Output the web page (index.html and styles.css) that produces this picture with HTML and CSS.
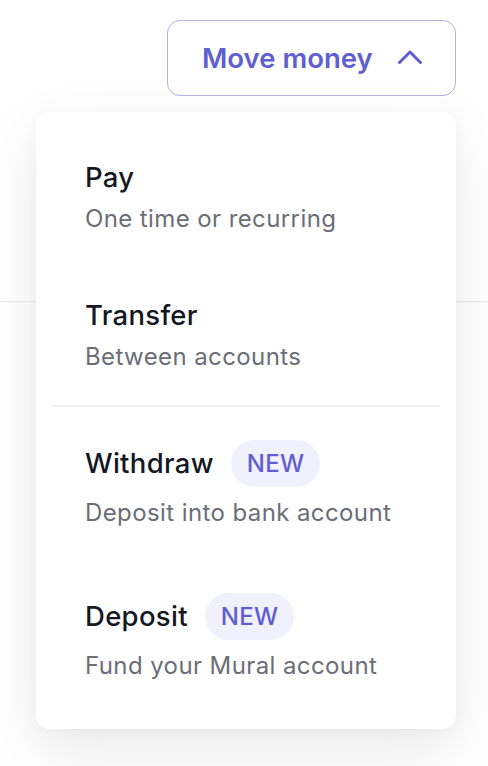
FILE: index.html
```html
<!DOCTYPE html>
<html>
<head>
  <meta charset="UTF-8">
  <link rel="stylesheet" href="styles.css">
</head>
<body>
  <!-- top bar -->
  <div class="topbar">
    <div class="move-wrap">
      <button class="move-btn">
        <span>Move money</span>
        <svg class="chevron" width="26" height="16" viewBox="0 0 26 16" fill="none">
          <path d="M2.5 13.5 L13 3 L23.5 13.5" stroke="#5f5fd1" stroke-width="3" stroke-linecap="round" stroke-linejoin="round"/>
        </svg>
      </button>

      <!-- dropdown -->
      <div class="move-menu">
        <div class="menu-item">
          <div class="item-title">Pay</div>
          <div class="item-sub">One time or recurring</div>
        </div>
        <div class="menu-item">
          <div class="item-title">Transfer</div>
          <div class="item-sub">Between accounts</div>
        </div>
        <div class="menu-divider"></div>
        <div class="menu-item badge-item">
          <div class="item-row">
            <span class="item-title">Withdraw</span>
            <span class="badge">NEW</span>
          </div>
          <div class="item-sub">Deposit into bank account</div>
        </div>
        <div class="menu-item badge-item">
          <div class="item-row">
            <span class="item-title">Deposit</span>
            <span class="badge">NEW</span>
          </div>
          <div class="item-sub">Fund your Mural account</div>
        </div>
      </div>
    </div>
  </div>
  <div class="content"></div>
</body>
</html>
```

FILE: styles.css
```css
/* base */
html, body {
  margin: 0;
  background: #ffffff;
}

body {
  min-height: 766px;
  display: flex;
  flex-direction: column;
  font-family: Inter, "Noto Sans", sans-serif;
  color: #141824;
}

.topbar {
  height: 302px;
  flex-shrink: 0;
  border-bottom: 1px solid #ededed;
  display: flex;
  justify-content: flex-end;
  padding: 20px 32px 0 0;
  box-sizing: border-box;
}

.content {
  flex: 1;
}

.move-wrap {
  position: relative;
  z-index: 10;
}

/* button */
.move-btn {
  display: flex;
  align-items: center;
  gap: 24px;
  width: 289px;
  height: 76px;
  padding: 0 32px 0 34px;
  box-sizing: border-box;
  background: #fff;
  border: 1.5px solid #b3b2e6;
  border-radius: 13px;
  font-family: Inter, "Noto Sans", sans-serif;
  font-size: 27.5px;
  font-weight: 600;
  color: #5f5fd1;
}

.chevron {
  margin-top: -2px;
}

/* dropdown */
.move-menu {
  position: absolute;
  top: 92px;
  right: 0;
  width: 420px;
  padding: 17px 16px 16px;
  box-sizing: border-box;
  background: #fff;
  border-radius: 14px;
  box-shadow: 0 20px 60px rgba(0, 0, 0, 0.09), 0 2px 12px rgba(0, 0, 0, 0.03);
}

.menu-item {
  padding: 32px 32px 32px 33px;
  border-radius: 10px;
}

.badge-item {
  padding-bottom: 31px;
}

.item-title {
  font-size: 27.5px;
  line-height: 32px;
  font-weight: 500;
  letter-spacing: 0.3px;
  color: #151823;
}

.item-sub {
  margin-top: 10px;
  font-size: 24px;
  line-height: 32px;
  color: #6b6e76;
  letter-spacing: 0.4px;
}

.item-row {
  display: flex;
  align-items: center;
  gap: 17px;
  height: 48px;
}

.badge {
  display: inline-flex;
  align-items: center;
  height: 47px;
  padding: 0 16px;
  border-radius: 24px;
  background: #f1f0fd;
  color: #5f5fd1;
  font-size: 24px;
  font-weight: 500;
  letter-spacing: 0.3px;
}

.menu-divider {
  height: 2px;
  background: #eff0f2;
}
```
